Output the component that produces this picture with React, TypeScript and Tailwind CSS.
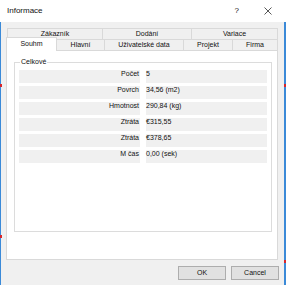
import React from "react";

const rows: [string, string][] = [
  ["Počet", "5"],
  ["Povrch", "34,56 (m2)"],
  ["Hmotnost", "290,84 (kg)"],
  ["Ztráta", "€315,55"],
  ["Ztráta", "€378,65"],
  ["M čas", "0,00 (sek)"],
];

export default function App() {
  return (
    <div className="relative w-[286px] h-[285px] bg-[#f0f0f0] flex flex-col font-['Liberation_Sans',Arial,sans-serif] text-[#111] overflow-hidden">
      {/* title bar */}
      <div className="h-[22px] bg-white flex items-center shrink-0">
        <span className="pl-[7px] text-[8px] leading-[10px]">Informace</span>
        <span className="ml-auto text-[8px] leading-[10px] mr-[25px]">?</span>
        <svg width="8" height="8" viewBox="0 0 8 8" className="mr-[14px]">
          <path d="M0.5 0.5 L7.5 7.5 M7.5 0.5 L0.5 7.5" stroke="#444" strokeWidth="0.9" />
        </svg>
      </div>

      {/* tabs */}
      <div className="ml-[6px] w-[272px] mt-[6px] flex flex-col">
        <div className="flex h-[11px] ml-[1px] text-[7px] leading-[8px]">
          <div className="w-[95px] border-t border-l border-[#d9d9d9] flex items-center justify-center">Zákazník</div>
          <div className="w-[89px] border-t border-l border-[#d9d9d9] flex items-center justify-center">Dodání</div>
          <div className="w-[87px] border-t border-l border-r border-[#d9d9d9] flex items-center justify-center">Variace</div>
        </div>
        <div className="flex h-[11px] items-end text-[7px] leading-[8px]">
          <div className="relative z-10 w-[51px] h-[14px] -mb-[1px] bg-white border-t border-l border-r border-[#d9d9d9] flex items-center justify-center pb-[1px]">Souhm</div>
          <div className="w-[47px] h-[11px] border-t border-[#d9d9d9] flex items-center justify-center">Hlavní</div>
          <div className="w-[79px] h-[11px] border-t border-l border-[#d9d9d9] flex items-center justify-center">Uživatelské data</div>
          <div className="w-[49px] h-[11px] border-t border-l border-[#d9d9d9] flex items-center justify-center">Projekt</div>
          <div className="w-[46px] h-[11px] border-t border-l border-r border-[#d9d9d9] flex items-center justify-center">Firma</div>
        </div>

        {/* panel */}
        <div className="h-[210px] bg-white border border-[#d9d9d9] pl-[7px] pt-[11px]">
          <div className="relative w-[258px] h-[170px] border border-[#dcdcdc] px-[4px] pt-[7px]">
            <span className="absolute left-[5px] top-[-5px] bg-white px-[1px] text-[7px] leading-[8px]">Celkové</span>
            <div className="grid grid-cols-2 gap-x-[6px] gap-y-[3px] text-[7px] leading-[8px]">
              {rows.map(([k, v], i) => (
                <React.Fragment key={i}>
                  <div className="h-[13px] bg-[#f0f0f0] text-right pr-[1px]">{k}</div>
                  <div className="h-[13px] bg-[#f0f0f0]">{v}</div>
                </React.Fragment>
              ))}
            </div>
          </div>
        </div>
      </div>

      {/* buttons */}
      <div className="mt-[6px] flex justify-end gap-[5px] pr-[7px]">
        <div className="w-[48px] h-[14px] bg-[#e1e1e1] border border-[#adadad] flex items-center justify-center text-[7px] leading-[8px]">OK</div>
        <div className="w-[48px] h-[14px] bg-[#e1e1e1] border border-[#adadad] flex items-center justify-center text-[7px] leading-[8px]">Cancel</div>
      </div>

      {/* desktop edges */}
      <div className="absolute left-0 top-[22px] bottom-0 w-[1px] bg-[#3b8ad8]" />
      <div className="absolute right-0 top-[22px] bottom-0 w-[2px] bg-[#3b8ad8]" />
      <div className="absolute left-0 top-[84px] w-[2px] h-[3px] bg-[#d8262b]" />
      <div className="absolute right-0 top-[84px] w-[2px] h-[3px] bg-[#d8262b]" />
      <div className="absolute left-0 top-[235px] w-[2px] h-[3px] bg-[#d8262b]" />
      <div className="absolute right-0 top-[260px] w-[2px] h-[3px] bg-[#d8262b]" />
    </div>
  );
}
